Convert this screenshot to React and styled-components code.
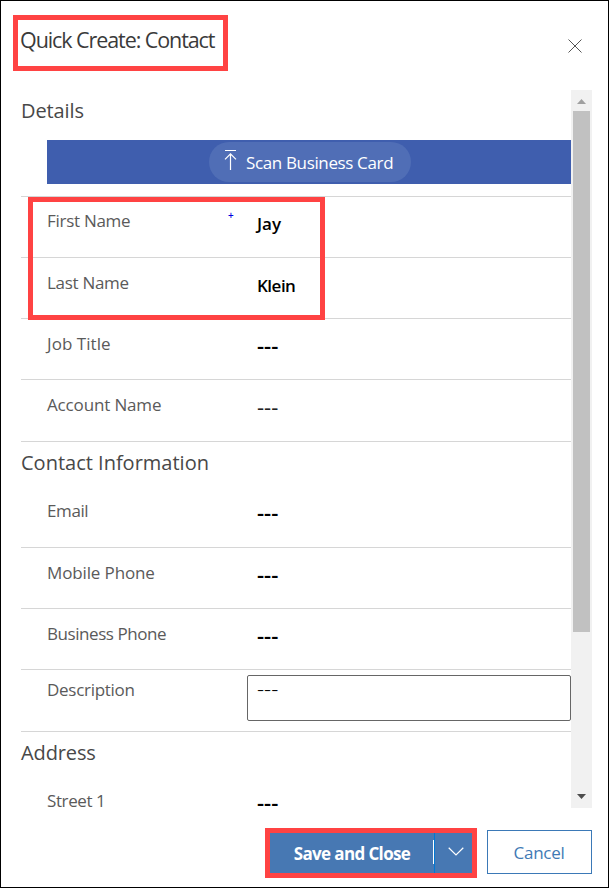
import React from 'react';
import styled, { createGlobalStyle } from 'styled-components';

const GlobalStyle = createGlobalStyle`
  *, *::before, *::after { box-sizing: border-box; }
  body { margin: 0; background: #fff; font-family: "Open Sans", "Noto Sans", sans-serif; }
  button { font: inherit; margin: 0; padding: 0; cursor: pointer; }
`;

const Panel = styled.main`
  position: relative;
  display: flex;
  flex-direction: column;
  width: 609px;
  height: 888px;
  padding: 0 16px 0 20px;
  border: 1px solid #000;
  background: #fff;
  overflow: hidden;
`;

const Header = styled.header`
  display: flex;
  justify-content: space-between;
  flex: none;
  height: 89px;
`;

const Title = styled.h1`
  margin: 25px 0 0 -1px;
  font-size: 21.5px;
  line-height: 28px;
  font-weight: 400;
  letter-spacing: -1.08px;
  color: #3a3a3a;
  white-space: nowrap;
`;

const CloseButton = styled.button`
  width: 16px;
  height: 16px;
  margin: 37px 9.5px 0 0;
  border: 0;
  background: none;
  svg { display: block; }
`;

const Body = styled.div`
  display: flex;
  flex: none;
  height: 718px;
`;

const Form = styled.form`
  width: 550px;
`;

const SectionTitle = styled.h2`
  height: ${(p) => p.$height}px;
  margin: 0;
  padding-top: 7px;
  border-top: ${(p) => (p.$line ? '1px solid #d6d6d6' : '0')};
  font-size: 20px;
  line-height: 28px;
  font-weight: 400;
  letter-spacing: ${(p) => p.$tracking}px;
  color: #484848;
  white-space: nowrap;
`;

const ScanBanner = styled.div`
  display: flex;
  justify-content: center;
  align-items: center;
  height: 44px;
  margin: 0 0 12px 26px;
  background: #3f5eae;
`;

const ScanButton = styled.button`
  display: flex;
  align-items: center;
  width: 202px;
  height: 40px;
  margin-left: 2px;
  padding-left: 15px;
  border: 0;
  border-radius: 20px;
  background: #506eb6;
  color: #fff;
  font-size: 17px;
  letter-spacing: -0.36px;
  white-space: nowrap;
  svg { flex: none; margin: -5px 8px 0 0; }
`;

const Row = styled.div`
  display: grid;
  grid-template-columns: 26px 181px 29px 1fr;
  height: ${(p) => p.$height || 61}px;
  padding-top: ${(p) => p.$pad ?? 15}px;
  border-top: 1px solid ${(p) => (p.$plain ? 'transparent' : '#d6d6d6')};
`;

const Label = styled.label`
  grid-column: 2;
  font-size: 17px;
  line-height: 20px;
  font-weight: 400;
  letter-spacing: ${(p) => p.$tracking}px;
  color: #5a5a5a;
  white-space: nowrap;
`;

const Recommended = styled.span`
  grid-column: 3;
  margin-top: -1px;
  font-size: 10px;
  line-height: 10px;
  font-weight: 600;
  color: #0000e0;
`;

const Value = styled.span`
  grid-column: 4;
  margin-top: 3px;
  font-size: 17px;
  line-height: 20px;
  font-weight: 600;
  letter-spacing: ${(p) => p.$tracking}px;
  color: #000;
`;

const EmptyValue = styled(Value)`
  margin-top: 1px;
  font-size: 22px;
  font-weight: ${(p) => (p.$light ? 400 : 550)};
  color: ${(p) => (p.$light ? '#222' : '#000')};
`;

const TextArea = styled.div`
  grid-column: 3 / 5;
  height: 46px;
  margin: -5px 0 0 19px;
  padding: 2px 0 0 9px;
  border: 1px solid #666;
  border-radius: 2px;
`;

const AreaText = styled.span`
  display: block;
  font-size: 22px;
  line-height: 20px;
  font-weight: 300;
  color: #000;
`;

const Scrollbar = styled.div`
  display: flex;
  flex-direction: column;
  align-items: center;
  width: 21px;
  background: #f1f1f1;
`;

const Thumb = styled.div`
  width: 17px;
  height: 521px;
  background: #c1c1c1;
`;

const Arrow = styled.div`
  display: flex;
  justify-content: center;
  align-items: center;
  height: ${(p) => (p.$end ? 23 : 21)}px;
  padding-top: ${(p) => (p.$end ? 0 : 2)}px;
  margin-top: ${(p) => (p.$end ? 'auto' : '0')};
  svg { display: block; }
`;

const Footer = styled.footer`
  display: flex;
  justify-content: flex-end;
  gap: 15px;
  padding-top: 22px;
`;

const SplitButton = styled.div`
  display: flex;
  width: 203px;
  height: 44px;
  background: #4778b3;
`;

const SaveButton = styled.button`
  width: 164px;
  padding: 2px 0 0 2px;
  border: 0;
  background: none;
  color: #fff;
  font-size: 17px;
  font-weight: 700;
  letter-spacing: -0.63px;
  white-space: nowrap;
`;

const Divider = styled.div`
  width: 1px;
  height: 24px;
  margin-top: 10px;
  background: #fff;
`;

const MenuButton = styled.button`
  display: flex;
  justify-content: center;
  align-items: center;
  flex: 1;
  padding: 0 0 1px 4px;
  border: 0;
  border-left: 1px solid #0078d4;
  background: none;
`;

const CancelButton = styled.button`
  width: 105px;
  height: 44px;
  padding-right: 1px;
  border: 1px solid #3b79b7;
  background: #fff;
  color: #3f7ab5;
  font-size: 17px;
  font-weight: 400;
  letter-spacing: -0.3px;
`;

const Highlight = styled.div`
  position: absolute;
  left: ${(p) => p.$x - 1}px;
  top: ${(p) => p.$y - 1}px;
  width: ${(p) => p.$w}px;
  height: ${(p) => p.$h}px;
  border: 5px solid #ff4343;
  pointer-events: none;
`;

const details = [
  { label: 'First Name', tracking: -0.28, value: 'Jay', valueTracking: 0, pad: 14, recommended: true },
  { label: 'Last Name', tracking: -0.3, value: 'Klein', valueTracking: -0.5 },
  { label: 'Job Title', tracking: 0.06 },
  { label: 'Account Name', tracking: -0.15, height: 62, light: true },
];

const contactInfo = [
  { label: 'Email', tracking: -0.4, pad: 14, plain: true },
  { label: 'Mobile Phone', tracking: -0.13 },
  { label: 'Business Phone', tracking: -0.44 },
];

function Field({ field }) {
  return (
    <Row $height={field.height} $pad={field.pad} $plain={field.plain}>
      <Label $tracking={field.tracking}>{field.label}</Label>
      {field.recommended && <Recommended>+</Recommended>}
      {field.value
        ? <Value $tracking={field.valueTracking}>{field.value}</Value>
        : <EmptyValue $tracking={0} $light={field.light}>---</EmptyValue>}
    </Row>
  );
}

export default function App() {
  return (
    <>
      <GlobalStyle />
      <Panel>
        <Header>
          <Title>Quick Create: Contact</Title>
          <CloseButton aria-label="Close">
            <svg width="16" height="16" viewBox="0 0 16 16" stroke="#555" strokeWidth="1">
              <path d="M1.5 1.5 14.5 14.5M14.5 1.5 1.5 14.5" />
            </svg>
          </CloseButton>
        </Header>
        <Body>
          <Form>
            <SectionTitle $height={50} $tracking={-0.1}>Details</SectionTitle>
            <ScanBanner>
              <ScanButton type="button">
                <svg width="14" height="22" viewBox="0 0 14 22" fill="none" stroke="#fff" strokeWidth="1.2">
                  <path d="M1 1.5H12M6.5 4.8V21M1 10.3 6.5 4.8 12 10.3" />
                </svg>
                Scan Business Card
              </ScanButton>
            </ScanBanner>
            {details.map((f) => <Field key={f.label} field={f} />)}
            <SectionTitle $line $height={45} $tracking={0}>Contact Information</SectionTitle>
            {contactInfo.map((f) => <Field key={f.label} field={f} />)}
            <Row $height={62} $pad={10}>
              <Label $tracking={-0.28}>Description</Label>
              <TextArea><AreaText>---</AreaText></TextArea>
            </Row>
            <SectionTitle $line $height={45} $tracking={-0.12}>Address</SectionTitle>
            <Field field={{ label: 'Street 1', tracking: -0.4, pad: 14, plain: true, height: 35 }} />
          </Form>
          <Scrollbar>
            <Arrow>
              <svg width="9" height="5" viewBox="0 0 9 5"><path d="M4.5 0 9 5H0Z" fill="#a0a0a0" /></svg>
            </Arrow>
            <Thumb />
            <Arrow $end>
              <svg width="9" height="5" viewBox="0 0 9 5"><path d="M0 0H9L4.5 5Z" fill="#4d4d4d" /></svg>
            </Arrow>
          </Scrollbar>
        </Body>
        <Footer>
          <SplitButton>
            <SaveButton>Save and Close</SaveButton>
            <Divider />
            <MenuButton aria-label="More save options">
              <svg width="16" height="9" viewBox="0 0 16 9" fill="none" stroke="#fff" strokeWidth="1.2">
                <path d="M.7.8 8 8 15.3.8" />
              </svg>
            </MenuButton>
          </SplitButton>
          <CancelButton>Cancel</CancelButton>
        </Footer>
        <Highlight $x={13} $y={15} $w={215} $h={56} />
        <Highlight $x={28} $y={197} $w={297} $h={123} />
        <Highlight $x={265} $y={828} $w={212} $h={50} />
      </Panel>
    </>
  );
}
